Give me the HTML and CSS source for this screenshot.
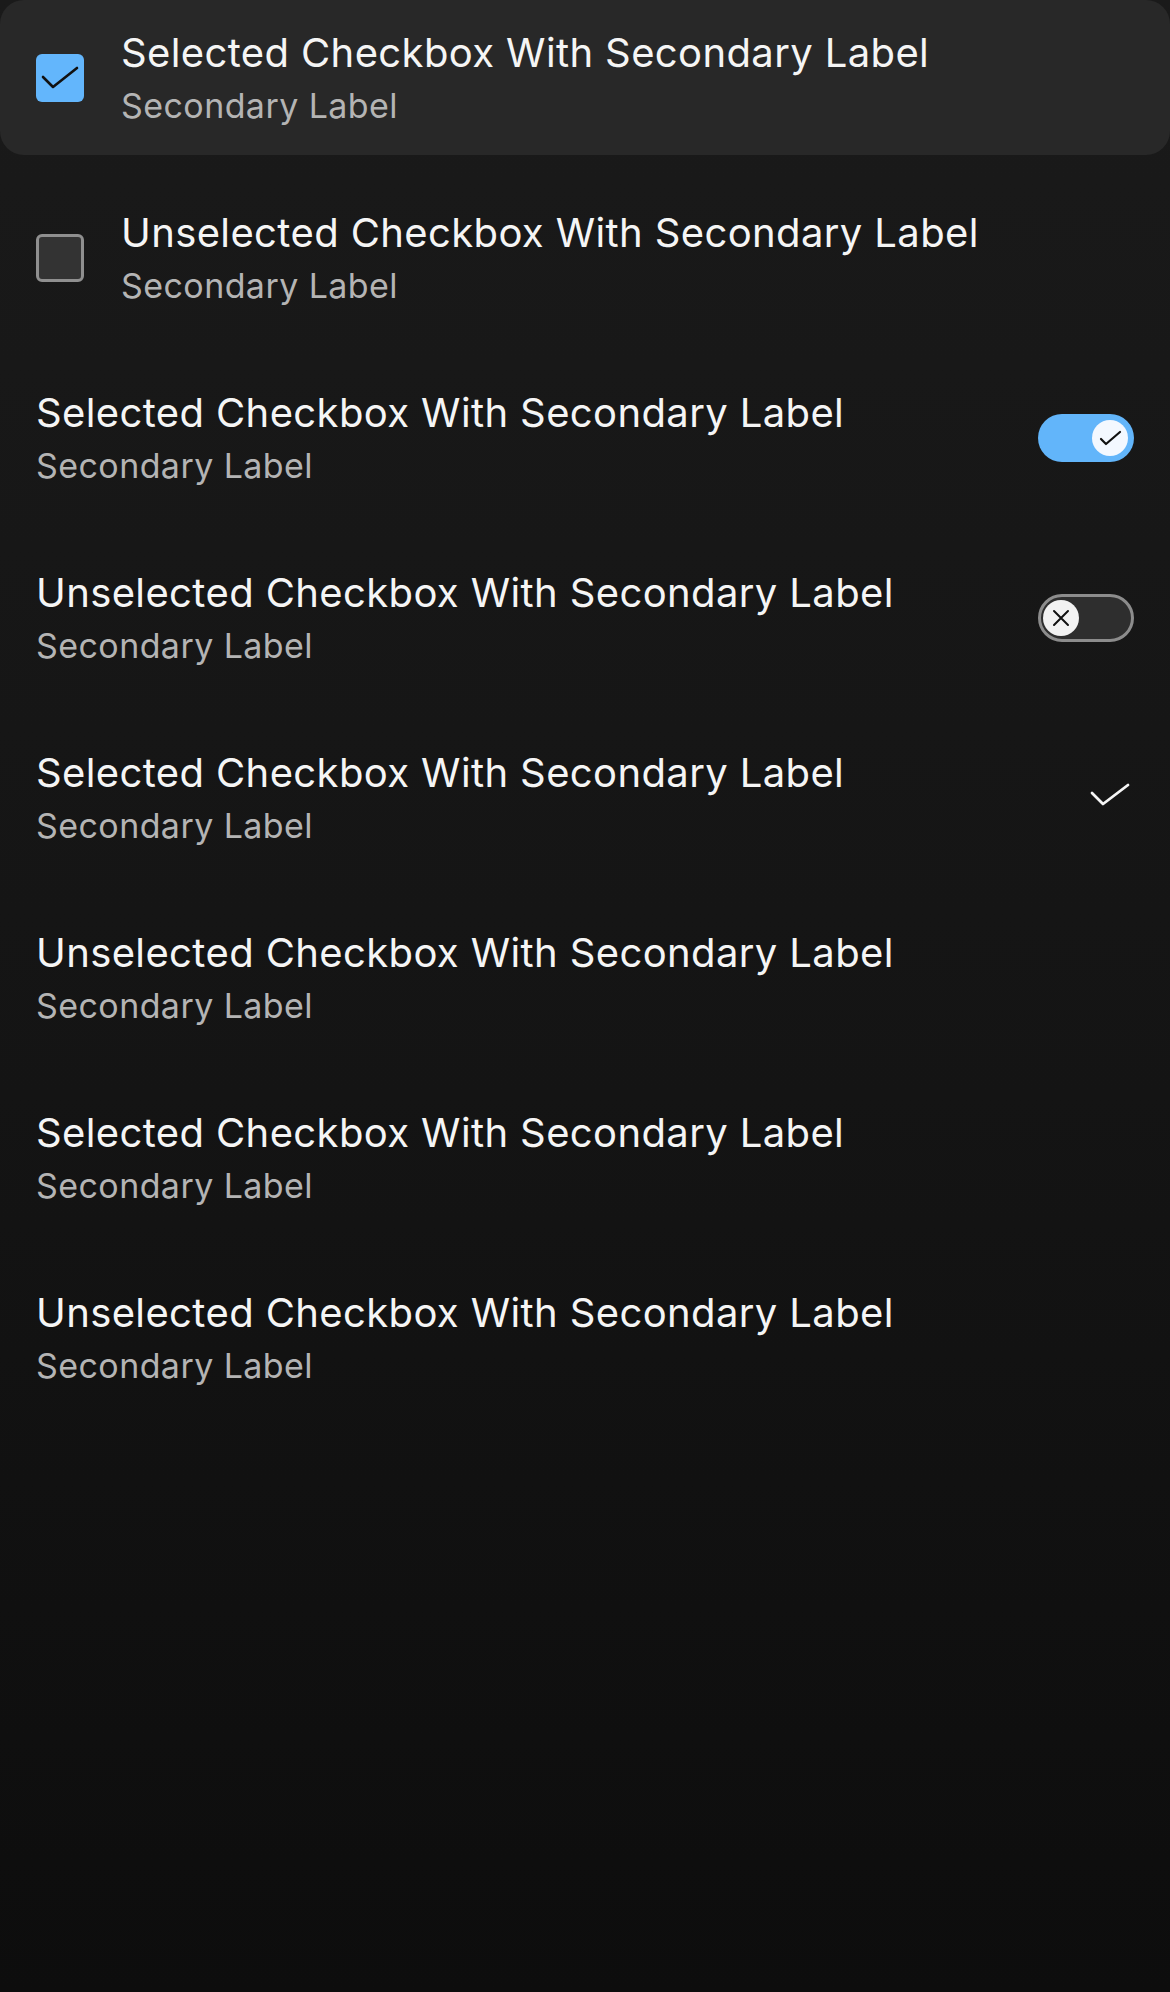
FILE: index.html
```html
<!DOCTYPE html>
<html lang="en">
<head>
<meta charset="utf-8">
<title>Checkbox list</title>
<link rel="stylesheet" href="styles.css">
</head>
<body>
<div class="list">
  <div class="row focused">
    <span class="box checked">
      <svg viewBox="0 0 48 48" width="48" height="48"><path d="M7 23 L17 33 L41 14" fill="none" stroke="#111" stroke-width="2.6" stroke-linecap="round" stroke-linejoin="round"/></svg>
    </span>
    <div class="labels">
      <div class="primary">Selected Checkbox With Secondary Label</div>
      <div class="secondary">Secondary Label</div>
    </div>
  </div>
  <div class="row">
    <span class="box"></span>
    <div class="labels">
      <div class="primary">Unselected Checkbox With Secondary Label</div>
      <div class="secondary">Secondary Label</div>
    </div>
  </div>
  <div class="row">
    <div class="labels grow">
      <div class="primary">Selected Checkbox With Secondary Label</div>
      <div class="secondary">Secondary Label</div>
    </div>
    <span class="toggle on">
      <span class="knob">
        <svg viewBox="0 0 36 36" width="36" height="36"><path d="M9 19 L14 24 L28 12" fill="none" stroke="#111" stroke-width="2.2" stroke-linecap="round" stroke-linejoin="round"/></svg>
      </span>
    </span>
  </div>
  <div class="row">
    <div class="labels grow">
      <div class="primary">Unselected Checkbox With Secondary Label</div>
      <div class="secondary">Secondary Label</div>
    </div>
    <span class="toggle off">
      <span class="knob">
        <svg viewBox="0 0 36 36" width="36" height="36"><path d="M11 11 L25 25 M25 11 L11 25" fill="none" stroke="#111" stroke-width="2" stroke-linecap="round"/></svg>
      </span>
    </span>
  </div>
  <div class="row">
    <div class="labels grow">
      <div class="primary">Selected Checkbox With Secondary Label</div>
      <div class="secondary">Secondary Label</div>
    </div>
    <span class="tick">
      <svg viewBox="0 0 48 48" width="48" height="48"><path d="M6 19 L17 30 L42 11" fill="none" stroke="#f5f5f5" stroke-width="2.8" stroke-linecap="round" stroke-linejoin="round"/></svg>
    </span>
  </div>
  <div class="row">
    <div class="labels grow">
      <div class="primary">Unselected Checkbox With Secondary Label</div>
      <div class="secondary">Secondary Label</div>
    </div>
  </div>
  <div class="row">
    <div class="labels grow">
      <div class="primary">Selected Checkbox With Secondary Label</div>
      <div class="secondary">Secondary Label</div>
    </div>
  </div>
  <div class="row">
    <div class="labels grow">
      <div class="primary">Unselected Checkbox With Secondary Label</div>
      <div class="secondary">Secondary Label</div>
    </div>
  </div>
</div>
</body>
</html>
```
FILE: styles.css
```css
html, body {
  margin: 0;
  padding: 0;
}
body {
  width: 1170px;
  min-height: 1992px;
  background: linear-gradient(180deg, #1a1a1a 0%, #141414 55%, #0d0d0d 100%);
  font-family: Inter, "Noto Sans", sans-serif;
  color: #f4f4f4;
}
.list {
  display: flex;
  flex-direction: column;
  gap: 25px;
}
.row {
  height: 155px;
  box-sizing: border-box;
  padding: 0 36px;
  display: flex;
  align-items: center;
  gap: 37px;
  border-radius: 24px;
}
.row.focused {
  background: #282828;
}
.box {
  flex: none;
  width: 48px;
  height: 48px;
  box-sizing: border-box;
  border-radius: 6px;
  border: 3px solid #8f8f8f;
  background: #333333;
  display: flex;
}
.box.checked {
  border: none;
  background: #63b6fc;
}
.labels {
  display: flex;
  flex-direction: column;
  gap: 5px;
}
.grow {
  flex: 1;
  min-width: 0;
}
.primary {
  font-size: 40px;
  line-height: 52px;
  color: #f5f5f5;
  letter-spacing: 0.38px;
}
.secondary {
  font-size: 34px;
  line-height: 44px;
  color: #b4b4b4;
  letter-spacing: 0.42px;
}
.toggle {
  flex: none;
  width: 96px;
  height: 48px;
  box-sizing: border-box;
  border-radius: 24px;
  display: flex;
  align-items: center;
}
.toggle.on {
  background: #62b5fa;
  justify-content: flex-end;
  padding-right: 6px;
}
.toggle.off {
  background: #2e2e2e;
  border: 3px solid #8c8c8c;
  justify-content: flex-start;
  padding-left: 2px;
}
.knob {
  width: 36px;
  height: 36px;
  border-radius: 50%;
  display: flex;
}
.toggle.on .knob {
  background: #f3f8ff;
}
.toggle.off .knob {
  background: #f2f2f2;
}
.tick {
  flex: none;
  width: 48px;
  height: 48px;
  display: flex;
}
```
